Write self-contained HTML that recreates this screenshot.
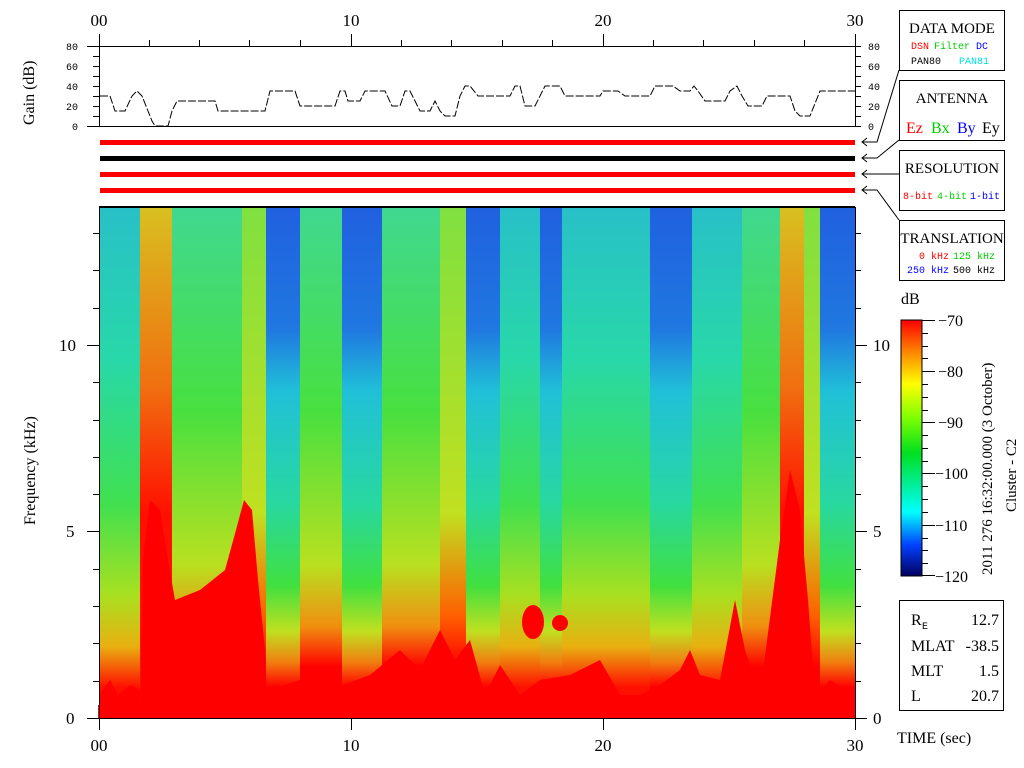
<!DOCTYPE html>
<html><head><meta charset="utf-8"><style>
html,body{margin:0;padding:0;background:#fff;width:1024px;height:768px;overflow:hidden}
svg{display:block}
.s{font-family:"Liberation Serif",serif;fill:#000}
.m{font-family:"Liberation Mono",monospace;font-size:10px}
</style></head><body>
<svg width="1024" height="768" viewBox="0 0 1024 768" xmlns="http://www.w3.org/2000/svg">
<defs>
<linearGradient id="gB" x1="0" y1="0" x2="0" y2="1">
<stop offset="0" stop-color="#2060e0"/><stop offset=".24" stop-color="#2078e0"/><stop offset=".36" stop-color="#20c0d8"/><stop offset=".58" stop-color="#28d8a0"/><stop offset=".74" stop-color="#40e040"/><stop offset=".83" stop-color="#c0e020"/><stop offset=".89" stop-color="#f08010"/><stop offset=".94" stop-color="#ff0000"/></linearGradient>
<linearGradient id="gC" x1="0" y1="0" x2="0" y2="1">
<stop offset="0" stop-color="#28c0c8"/><stop offset=".3" stop-color="#28d8a8"/><stop offset=".58" stop-color="#40e050"/><stop offset=".76" stop-color="#a8e020"/><stop offset=".86" stop-color="#e8b010"/><stop offset=".94" stop-color="#ff1000"/></linearGradient>
<linearGradient id="gG" x1="0" y1="0" x2="0" y2="1">
<stop offset="0" stop-color="#40d890"/><stop offset=".4" stop-color="#48e040"/><stop offset=".7" stop-color="#b8e020"/><stop offset=".82" stop-color="#f09010"/><stop offset=".9" stop-color="#ff0000"/></linearGradient>
<linearGradient id="gY" x1="0" y1="0" x2="0" y2="1">
<stop offset="0" stop-color="#80e040"/><stop offset=".6" stop-color="#c0e020"/><stop offset=".8" stop-color="#ff6000"/><stop offset=".9" stop-color="#ff0000"/></linearGradient>
<linearGradient id="gR" x1="0" y1="0" x2="0" y2="1">
<stop offset="0" stop-color="#d8c020"/><stop offset=".35" stop-color="#f07010"/><stop offset=".6" stop-color="#ff1000"/></linearGradient>
<linearGradient id="cb" x1="0" y1="0" x2="0" y2="1">
<stop offset="0" stop-color="#ff0000"/><stop offset=".12" stop-color="#ff8000"/><stop offset=".25" stop-color="#ffff00"/><stop offset=".38" stop-color="#80ff00"/><stop offset=".52" stop-color="#00e020"/><stop offset=".65" stop-color="#00f0a0"/><stop offset=".75" stop-color="#00ffff"/><stop offset=".88" stop-color="#0040ff"/><stop offset="1" stop-color="#000060"/></linearGradient>
</defs>

<g class="s" font-size="17" text-anchor="middle">
<text x="99" y="26">00</text><text x="351" y="26">10</text><text x="603" y="26">20</text><text x="855" y="26">30</text>
</g>
<g stroke="#000" stroke-width="1" fill="none">
<path d="M87 46.5H861M87 126.5H861M99.5 34V126M855.5 34V126"/>
<path d="M149.5 40V46M199.5 40V46M249.5 40V46M300.5 40V46M401.5 40V46M451.5 40V46M502.5 40V46M552.5 40V46M653.5 40V46M703.5 40V46M754.5 40V46M804.5 40V46M351.5 34V46M603.5 34V46"/>
<path d="M93 56.5H99M93 66.5H99M93 76.5H99M93 86.5H99M93 96.5H99M93 106.5H99M93 116.5H99M855 56.5H861M855 66.5H861M855 76.5H861M855 86.5H861M855 96.5H861M855 106.5H861M855 116.5H861"/>
<polyline points="100,96 110,96 115,111 125,111 132,96 137,91 142,96 148,111 152,121 155,126 168,126 172,111 177,101 215,101 218,111 265,111 270,91 295,91 300,106 335,106 340,91 345,91 348,101 360,101 365,91 385,91 392,106 400,106 405,91 410,91 420,111 430,111 435,101 440,111 445,116 455,116 460,96 465,86 470,86 478,96 510,96 515,86 520,86 525,106 535,106 545,86 560,86 565,96 600,96 603,91 618,91 625,96 650,96 655,86 673,86 680,91 690,91 694,86 698,91 705,101 725,101 730,91 737,86 742,96 748,106 762,106 767,96 790,96 795,111 800,116 810,116 820,91 855,91" stroke-dasharray="8,2"/>
</g>
<g class="m" font-size="11">
<text x="66" y="50">80</text><text x="66" y="70">60</text><text x="66" y="90">40</text><text x="66" y="110">20</text><text x="72" y="130">0</text>
<text x="868" y="50">80</text><text x="868" y="70">60</text><text x="868" y="90">40</text><text x="868" y="110">20</text><text x="868" y="130">0</text>
</g>
<text class="s" font-size="16" transform="translate(34,125) rotate(-90)">Gain (dB)</text>

<rect x="100" y="140" width="755" height="5" fill="#f00"/>
<rect x="100" y="156" width="755" height="5" fill="#000"/>
<rect x="100" y="172" width="755" height="5" fill="#f00"/>
<rect x="100" y="188" width="755" height="5" fill="#f00"/>

<g stroke="#000" fill="none" stroke-width="1">
<path d="M899 70L877 142H862M867 138L862 142L867 146"/>
<path d="M899 140L877 158H862M867 154L862 158L867 162"/>
<path d="M899 174H862M867 170L862 174L867 178"/>
<path d="M899 220L877 190H862M867 186L862 190L867 194"/>
<rect x="899.5" y="10.5" width="105" height="60"/>
<rect x="899.5" y="80.5" width="105" height="60"/>
<rect x="899.5" y="150.5" width="105" height="60"/>
<rect x="899.5" y="220.5" width="105" height="60"/>
</g>
<g class="s" font-size="15" text-anchor="middle">
<text x="952" y="33">DATA MODE</text><text x="952" y="103">ANTENNA</text><text x="952" y="173">RESOLUTION</text><text x="952" y="243">TRANSLATION</text>
</g>
<g class="m">
<text x="911" y="49" fill="#f00">DSN</text><text x="934" y="49" fill="#0c0">Filter</text><text x="976" y="49" fill="#00f">DC</text>
<text x="911" y="64" fill="#000">PAN80</text><text x="959" y="64" fill="#0dd">PAN81</text>
<text x="903" y="199" fill="#f00">8-bit</text><text x="937" y="199" fill="#0c0">4-bit</text><text x="970" y="199" fill="#00f">1-bit</text>
<text x="919" y="259" fill="#f00">0 kHz</text><text x="953" y="259" fill="#0c0">125 kHz</text>
<text x="907" y="273" fill="#00f">250 kHz</text><text x="953" y="273" fill="#000">500 kHz</text>
</g>
<g class="s" font-size="16">
<text x="906" y="133" fill="#f00">Ez</text><text x="931" y="133" fill="#0c0">Bx</text><text x="957" y="133" fill="#00f">By</text><text x="982" y="133">Ey</text>
</g>

<g>
<rect x="99" y="207" width="30" height="511" fill="url(#gC)"/>
<rect x="129" y="207" width="11" height="511" fill="url(#gC)"/>
<rect x="140" y="207" width="32" height="511" fill="url(#gR)"/>
<rect x="172" y="207" width="70" height="511" fill="url(#gG)"/>
<rect x="242" y="207" width="24" height="511" fill="url(#gY)"/>
<rect x="266" y="207" width="34" height="511" fill="url(#gB)"/>
<rect x="300" y="207" width="42" height="511" fill="url(#gG)"/>
<rect x="342" y="207" width="40" height="511" fill="url(#gB)"/>
<rect x="382" y="207" width="58" height="511" fill="url(#gG)"/>
<rect x="440" y="207" width="26" height="511" fill="url(#gY)"/>
<rect x="466" y="207" width="34" height="511" fill="url(#gB)"/>
<rect x="500" y="207" width="40" height="511" fill="url(#gC)"/>
<rect x="540" y="207" width="22" height="511" fill="url(#gB)"/>
<rect x="562" y="207" width="40" height="511" fill="url(#gC)"/>
<rect x="602" y="207" width="48" height="511" fill="url(#gC)"/>
<rect x="650" y="207" width="42" height="511" fill="url(#gB)"/>
<rect x="692" y="207" width="38" height="511" fill="url(#gC)"/>
<rect x="730" y="207" width="12" height="511" fill="url(#gC)"/>
<rect x="742" y="207" width="38" height="511" fill="url(#gG)"/>
<rect x="780" y="207" width="24" height="511" fill="url(#gR)"/>
<rect x="804" y="207" width="16" height="511" fill="url(#gY)"/>
<rect x="820" y="207" width="35" height="511" fill="url(#gB)"/>
<g fill="#ff0000">
<polygon points="140,718 143,560 150,500 160,510 168,560 175,600 200,590 225,570 236,530 244,500 252,510 258,580 265,650 268,718"/>
<polygon points="99,718 99,695 110,680 118,695 130,685 140,690 140,718"/>
<polygon points="265,718 270,690 300,680 330,690 370,675 400,650 420,670 440,630 455,660 470,640 485,695 500,665 520,695 540,680 570,675 600,660 620,695 640,695 660,685 680,670 690,650 700,675 720,680 735,600 745,650 760,695 780,540 790,470 800,510 808,600 815,695 830,680 855,695 855,718"/>
<ellipse cx="533" cy="622" rx="11" ry="17"/><ellipse cx="560" cy="623" rx="8" ry="8"/>
<rect x="98" y="705" width="757" height="13"/>
</g>
</g>
<rect x="99" y="206" width="756" height="2" fill="#000"/>
<g stroke="#000" fill="none">
<path d="M99.5 207V730M855.5 207V730M99 718.5H855"/>
<path d="M87 718.5H99M87 531.5H99M87 345.5H99M855 718.5H867M855 531.5H867M855 345.5H867"/>
<path d="M93 681.5H99M93 643.5H99M93 606.5H99M93 569.5H99M93 494.5H99M93 457.5H99M93 420.5H99M93 382.5H99M93 308.5H99M93 270.5H99M93 233.5H99"/>
<path d="M855 681.5H861M855 643.5H861M855 606.5H861M855 569.5H861M855 494.5H861M855 457.5H861M855 420.5H861M855 382.5H861M855 308.5H861M855 270.5H861M855 233.5H861"/>
<path d="M351.5 718V730M603.5 718V730"/>
</g>
<g class="s" font-size="17">
<text x="66" y="724">0</text><text x="66" y="537">5</text><text x="59" y="351">10</text>
<text x="873" y="724">0</text><text x="873" y="537">5</text><text x="873" y="351">10</text>
<text x="99" y="751" text-anchor="middle">00</text><text x="351" y="751" text-anchor="middle">10</text><text x="603" y="751" text-anchor="middle">20</text><text x="855" y="751" text-anchor="middle">30</text>
<text x="897" y="743" font-size="16">TIME (sec)</text>
<text x="901" y="304" font-size="16">dB</text>
</g>
<text class="s" font-size="16" transform="translate(35,525) rotate(-90)">Frequency (kHz)</text>

<rect x="901" y="320" width="21" height="256" fill="url(#cb)" stroke="#000"/>
<g stroke="#000"><path d="M922 320.5H935M922 371.5H935M922 422.5H935M922 473.5H935M922 525.5H935M922 575.5H935M922 333.5H928M922 346.5H928M922 358.5H928M922 384.5H928M922 397.5H928M922 410.5H928M922 435.5H928M922 448.5H928M922 461.5H928M922 486.5H928M922 499.5H928M922 512.5H928M922 538.5H928M922 550.5H928M922 563.5H928"/></g>
<g class="s" font-size="16">
<text x="938" y="326">−70</text><text x="938" y="377">−80</text><text x="938" y="428">−90</text><text x="935" y="479">−100</text><text x="935" y="531">−110</text><text x="935" y="582">−120</text>
</g>
<text class="s" font-size="15" transform="translate(992,575) rotate(-90)">2011 276 16:32:00.000 (3 October)</text>
<text class="s" font-size="15" transform="translate(1016,512) rotate(-90)">Cluster - C2</text>

<rect x="899.5" y="600.5" width="104" height="110" fill="none" stroke="#000"/>
<g class="s" font-size="16">
<text x="911" y="625">R</text><text x="922" y="629" class="m" font-size="9">E</text><text x="999" y="625" text-anchor="end">12.7</text>
<text x="911" y="651">MLAT</text><text x="999" y="651" text-anchor="end">-38.5</text>
<text x="911" y="676">MLT</text><text x="999" y="676" text-anchor="end">1.5</text>
<text x="911" y="701">L</text><text x="999" y="701" text-anchor="end">20.7</text>
</g>
</svg>
</body></html>
